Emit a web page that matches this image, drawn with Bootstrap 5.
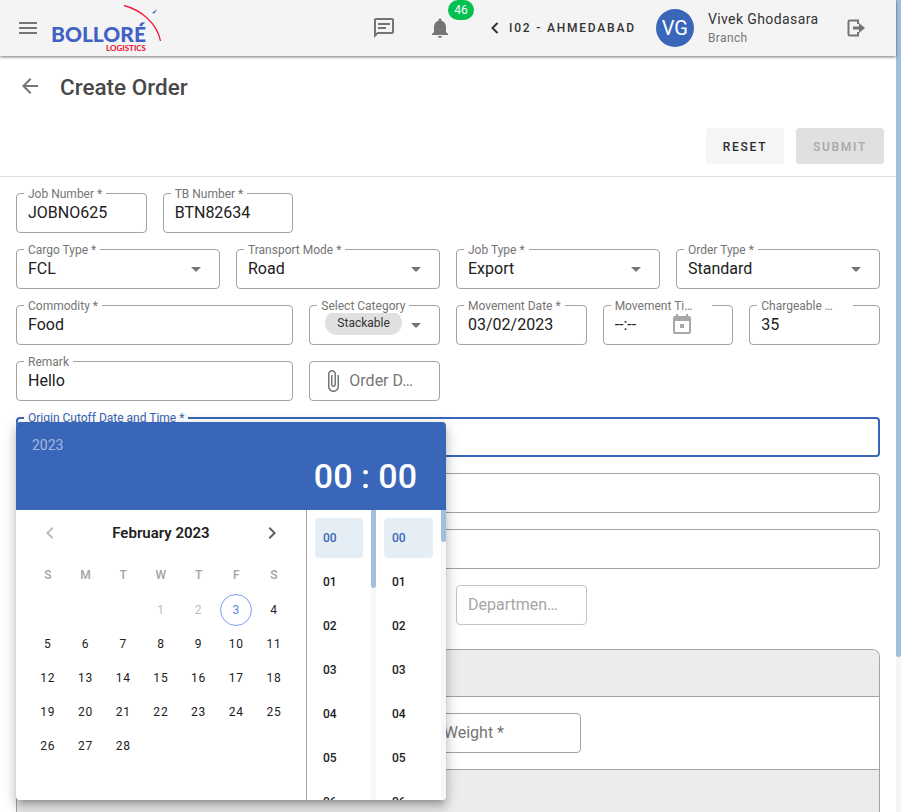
<!DOCTYPE html>
<html lang="en">
<head>
  <meta charset="UTF-8" />
  <title>Create Order</title>
  <link href="https://cdn.jsdelivr.net/npm/bootstrap@5.3.3/dist/css/bootstrap.min.css" rel="stylesheet" />
  <style>
    html, body { height: 100%; overflow: hidden; }
    body { font-family: Roboto, "Liberation Sans", sans-serif; color: #212121; background: #fff; }
    .shell { height: 812px; overflow: hidden; position: relative; }
    .page-col { width: 896px; flex: none; }
    .page-bar { width: 5px; flex: none; background: #f5f5f5; }
    .page-thumb { height: 657px; background: #a3bfe0; border-radius: 0 0 3px 3px; }

    /* top bar */
    .topbar { height: 56px; background: #f4f4f4; box-shadow: 0 1px 3px rgba(0,0,0,.55); position: relative; z-index: 2; }
    .ico { fill: #757575; display: block; flex: none; }
    .menu-btn { margin-left: 16px; }
    .brand { margin-left: 11px; flex: none; }
    .msg-ico { margin-left: 209px; }
    .bell-wrap { margin-left: 32px; position: relative; width: 24px; height: 24px; }
    .count-pill { position: absolute; left: 20px; top: -16px; width: 26px; height: 20px; background: #00c04f; color: #fff; font-size: 12px; font-weight: 400; line-height: 20px; text-align: center; border-radius: 10px; }
    .branch-back { margin-left: 38px; flex: none; }
    .branch-name { margin-left: 9px; font-size: 12px; font-weight: 500; letter-spacing: 1.8px; color: #333; white-space: nowrap; }
    .avatar { width: 38px; height: 38px; margin-left: 20px; background: #3966b8; color: #fff; font-size: 20px; flex: none; }
    .who { margin-left: 14px; width: 135px; letter-spacing: .4px; }
    .who-name { font-size: 14px; line-height: 18px; color: #333; }
    .who-role { font-size: 12px; line-height: 16px; color: #777; margin-top: 2px; }

    /* title and actions */
    .title-row { height: 60px; padding-left: 18px; }
    .page-title { font-size: 22.5px; font-weight: 500; color: #484848; margin: 1px 0 0 18px; line-height: 60px; }
    .action-row { padding: 12px 12px 12px 0; border-bottom: 1px solid #e0e0e0; }
    .act-btn { height: 36px; font-size: 12px; font-weight: 500; letter-spacing: 1.75px; border: 0; border-radius: 4px; padding: 2px 0 0; }
    .act-reset { width: 78px; background: #f5f5f5; color: #2b2b2b; }
    .act-submit { width: 88px; background: #e0e0e0; color: #a8a8a8; }
    .act-btn:disabled { background: #e0e0e0; color: #a8a8a8; opacity: 1; }

    /* outlined fields */
    .fld { height: 40px; border: 1px solid #a3a3a3; border-radius: 4px; padding: 0 11px; position: relative; background: #fff; }
    .fld-label { position: absolute; left: 7px; top: -7px; background: #fff; padding: 0 4px; font-size: 12px; line-height: 14px; color: #757575; white-space: nowrap; }
    .fld-label.cut { padding-right: 20px; }
    .fld-in { flex: 1 1 auto; min-width: 0; border: 0; padding: 0; background: transparent; font-size: 16px; line-height: 20px; color: #212121; border-radius: 0; box-shadow: none; }
    .fld-in:focus { box-shadow: none; background: transparent; }
    .caret-down { width: 0; height: 0; border-left: 5px solid transparent; border-right: 5px solid transparent; border-top: 5px solid #757575; margin-right: 7px; margin-left: 8px; flex: none; }
    .soft-chip { height: 24px; line-height: 24px; padding: 0 12px; margin-left: 4px; margin-top: -4px; border-radius: 12px; background: #e0e0e0; font-size: 12px; color: #333; }
    .fld-focus { border: 2px solid #3966b8; padding: 0 10px; }
    .fld-focus .fld-label { color: #3966b8; left: 6px; top: -8px; }
    .fld-off { border-color: #c4c4c4; }
    .muted-txt { font-size: 16px; color: #777; white-space: nowrap; }
    .fld-off .muted-txt { color: #a6a6a6; }
    .time-ico { flex: none; margin-right: 27px; }

    /* panel below the fields */
    .grey-panel { border: 1px solid #a3a3a3; border-bottom: 0; border-radius: 8px 8px 0 0; overflow: hidden; margin-top: 24px; }
    .panel-head { height: 47px; background: #ebecee; border-bottom: 1px solid #a3a3a3; }
    .panel-body { height: 73px; padding: 16px; border-bottom: 1px solid #a3a3a3; }
    .panel-next { height: 60px; background: #ebecee; }
    .w-left { width: 337px; }
    .w-right { width: 195px; }
    .plain-val { font-size: 16px; color: #757575; white-space: nowrap; }

    /* date time popup */
    .dt-popup { position: absolute; left: 16px; top: 422px; width: 430px; height: 378px; background: #fff; border-radius: 4px; overflow: hidden; z-index: 3;
      box-shadow: 0 5px 5px -3px rgba(0,0,0,.2), 0 8px 10px 1px rgba(0,0,0,.14), 0 3px 14px 2px rgba(0,0,0,.12); }
    .dt-head { height: 88px; background: #3966b8; color: #fff; padding: 14px 29px 0 16px; }
    .dt-year { font-size: 14px; line-height: 18px; color: rgba(255,255,255,.55); }
    .dt-time { font-size: 34px; font-weight: 500; line-height: 40px; text-align: right; margin-top: 2px; }
    .dt-body { height: 290px; }
    .cal-side { width: 291px; flex: none; padding: 0 13px; border-right: 1px solid #a3a3a3; }
    .cal-month { height: 46px; padding: 0 9px 0 9px; }
    .cal-title { font-size: 15px; font-weight: 600; color: #212121; }
    .cal-grid { display: grid; grid-template-columns: repeat(7, 37.7px); }
    .cal-dow { height: 36px; margin-top: 1px; font-size: 12px; font-weight: 500; color: #a3a3a3; }
    .cal-day { height: 34px; font-size: 12px; font-weight: 400; letter-spacing: .8px; color: #212121; }
    .cal-day.past { color: #bdbdbd; }
    .today-ring { width: 32px; height: 32px; border: 1px solid #7e9cf5; color: #5f86e6; }
    .hr-col { height: 290px; overflow: hidden; flex: none; }
    .hr-col-a { width: 64px; padding: 8px 8px 0 8px; }
    .hr-col-b { width: 65px; padding: 8px 8px 0 8px; }
    .hr-cell { height: 40px; margin-bottom: 4px; padding-left: 8px; font-size: 12px; font-weight: 500; color: #212121; border-radius: 4px; line-height: 40px; }
    .hr-cell.on { background: #e6eef5; color: #3966b8; }
    .hr-bar { width: 5px; height: 290px; background: #f7f7f7; flex: none; }
    .hr-thumb { background: #a3bfe0; border-radius: 0 0 3px 3px; }
    .thumb-a { height: 78px; }
    .thumb-b { height: 32px; }
  </style>
</head>
<body>
  <div class="shell d-flex">
    <div class="page-col">

      <header class="topbar d-flex align-items-center">
        <svg class="ico menu-btn" width="24" height="24" viewBox="0 0 24 24"><path d="M3 18h18v-2H3v2zm0-5h18v-2H3v2zm0-7v2h18V6H3z"/></svg>
        <svg class="brand" width="112" height="56" viewBox="0 0 112 56">
          <path d="M73 5.500C90 10 106 23 109.500 41" fill="none" stroke="#ee1c3e" stroke-width="1.300"/>
          <path d="M101 13l5-4-2.500 4.500z" fill="#3f62c4"/>
          <path d="M89 26l3.500-4-1.500 4.500z" fill="#3f62c4"/>
          <text x="0" y="42" font-family="Lato, sans-serif" font-weight="900" font-size="20" fill="#3f62c4" textLength="95" lengthAdjust="spacingAndGlyphs">BOLLORÉ</text>
          <text x="55" y="51" font-family="Lato, sans-serif" font-weight="900" font-size="7.500" fill="#ee1c3e" textLength="40" lengthAdjust="spacingAndGlyphs">LOGISTICS</text>
        </svg>
        <svg class="ico msg-ico" width="24" height="24" viewBox="0 0 24 24"><path d="M20 2H4c-1.100 0-2 .9-2 2v18l4-4h14c1.100 0 2-.9 2-2V4c0-1.100-.9-2-2-2zm0 14H5.200L4 17.200V4h16v12zM6 7h12v2H6zm0 4h8v2H6z"/></svg>
        <div class="bell-wrap">
          <svg class="ico" width="24" height="24" viewBox="0 0 24 24"><path d="M12 22c1.100 0 2-.9 2-2h-4c0 1.100.89 2 2 2zm6-6v-5c0-3.070-1.640-5.640-4.500-6.320V4c0-.83-.67-1.500-1.500-1.500s-1.500.67-1.500 1.500v.68C7.630 5.360 6 7.920 6 11v5l-2 2v1h16v-1l-2-2z"/></svg>
          <span class="count-pill">46</span>
        </div>
        <svg class="branch-back" width="10" height="14" viewBox="0 0 10 14"><path d="M7.500 2L2.500 7l5 5" fill="none" stroke="#333" stroke-width="2"/></svg>
        <span class="branch-name">I02 - AHMEDABAD</span>
        <div class="avatar rounded-circle d-flex align-items-center justify-content-center">VG</div>
        <div class="who">
          <div class="who-name">Vivek Ghodasara</div>
          <div class="who-role">Branch</div>
        </div>
        <svg width="20" height="20" viewBox="0 0 20 20" class="flex-shrink-0 ms-1">
          <path d="M11 6V2.500H2.500a1 1 0 0 0-1 1v13a1 1 0 0 0 1 1H11V14" fill="none" stroke="#757575" stroke-width="2"/>
          <path d="M6 8.500h6V5l6 5-6 5v-3.500H6z" fill="#757575"/>
        </svg>
      </header>

      <div class="title-row d-flex align-items-center">
        <svg class="ico" width="24" height="24" viewBox="0 0 24 24"><path d="M20 11H7.830l5.590-5.590L12 4l-8 8 8 8 1.410-1.410L7.830 13H20v-2z"/></svg>
        <h1 class="page-title">Create Order</h1>
      </div>
      <div class="action-row d-flex justify-content-end gap-2">
        <button type="button" class="btn act-btn act-reset me-1">RESET</button>
        <button type="button" class="btn act-btn act-submit" disabled>SUBMIT</button>
      </div>

      <form class="p-3">
        <div class="row g-3 mb-3">
          <div class="col-2"><div class="fld d-flex align-items-center"><label class="fld-label">Job Number *</label><input class="form-control fld-in" value="JOBNO625" readonly /></div></div>
          <div class="col-2"><div class="fld d-flex align-items-center"><label class="fld-label">TB Number *</label><input class="form-control fld-in" value="BTN82634" readonly /></div></div>
        </div>
        <div class="row g-3 mb-3">
          <div class="col-3"><div class="fld d-flex align-items-center"><label class="fld-label">Cargo Type *</label><input class="form-control fld-in" value="FCL" readonly /><span class="caret-down"></span></div></div>
          <div class="col-3"><div class="fld d-flex align-items-center"><label class="fld-label">Transport Mode *</label><input class="form-control fld-in" value="Road" readonly /><span class="caret-down"></span></div></div>
          <div class="col-3"><div class="fld d-flex align-items-center"><label class="fld-label">Job Type *</label><input class="form-control fld-in" value="Export" readonly /><span class="caret-down"></span></div></div>
          <div class="col-3"><div class="fld d-flex align-items-center"><label class="fld-label">Order Type *</label><input class="form-control fld-in" value="Standard" readonly /><span class="caret-down"></span></div></div>
        </div>
        <div class="row g-3 mb-3">
          <div class="col-4"><div class="fld d-flex align-items-center"><label class="fld-label">Commodity *</label><input class="form-control fld-in" value="Food" readonly /></div></div>
          <div class="col-2"><div class="fld d-flex align-items-center"><label class="fld-label">Select Category</label><span class="soft-chip">Stackable</span><span class="flex-grow-1"></span><span class="caret-down"></span></div></div>
          <div class="col-2"><div class="fld d-flex align-items-center"><label class="fld-label">Movement Date *</label><input class="form-control fld-in" value="03/02/2023" readonly /></div></div>
          <div class="col-2"><div class="fld d-flex align-items-center"><label class="fld-label cut">Movement Ti…</label><input class="form-control fld-in" value="--:--" readonly /><svg class="time-ico" width="24" height="24" viewBox="0 0 24 24" fill="#a8a8a8"><path d="M19 3h-1V1h-2v2H8V1H6v2H5a2 2 0 0 0-2 2v14a2 2 0 0 0 2 2h14a2 2 0 0 0 2-2V5a2 2 0 0 0-2-2zm0 16H5V8h14v11zM10 11h4v4h-4z"/></svg></div></div>
          <div class="col-2"><div class="fld d-flex align-items-center"><label class="fld-label cut">Chargeable …</label><input class="form-control fld-in" value="35" readonly /></div></div>
        </div>
        <div class="row g-3 mb-3">
          <div class="col-4"><div class="fld d-flex align-items-center"><label class="fld-label">Remark</label><input class="form-control fld-in" value="Hello" readonly /></div></div>
          <div class="col-2"><div class="fld d-flex align-items-center"><svg class="me-1 flex-shrink-0" width="24" height="24" viewBox="0 0 24 24" fill="#757575"><path d="M16.500 6v11.500c0 2.210-1.790 4-4 4s-4-1.790-4-4V5c0-1.380 1.120-2.500 2.500-2.500s2.500 1.120 2.500 2.500v10.500c0 .55-.45 1-1 1s-1-.45-1-1V6H10v9.500c0 1.380 1.120 2.500 2.500 2.500s2.500-1.120 2.500-2.500V5c0-2.210-1.790-4-4-4S7 2.790 7 5v12.500c0 3.040 2.460 5.500 5.500 5.500s5.500-2.460 5.500-5.500V6h-1.500z"/></svg><span class="muted-txt">Order D…</span></div></div>
        </div>
        <div class="row g-3 mb-3">
          <div class="col-12"><div class="fld fld-focus d-flex align-items-center"><label class="fld-label">Origin Cutoff Date and Time *</label></div></div>
        </div>
        <div class="row g-3 mb-3"><div class="col-12"><div class="fld"></div></div></div>
        <div class="row g-3 mb-3"><div class="col-12"><div class="fld"></div></div></div>
        <div class="row g-3 mb-3">
          <div class="col-4"><div class="fld"></div></div>
          <div class="col-2"><div class="fld"></div></div>
          <div class="col-2"><div class="fld fld-off d-flex align-items-center"><span class="muted-txt">Departmen…</span></div></div>
        </div>

        <div class="grey-panel">
          <div class="panel-head"></div>
          <div class="panel-body d-flex gap-3">
            <div class="fld w-left"></div>
            <div class="fld w-right d-flex align-items-center"><span class="plain-val">Gross Weight *</span></div>
          </div>
          <div class="panel-next"></div>
        </div>
      </form>
    </div>

    <div class="page-bar"><div class="page-thumb"></div></div>

    <div class="dt-popup">
      <div class="dt-head">
        <div class="dt-year">2023</div>
        <div class="dt-time">00 : 00</div>
      </div>
      <div class="dt-body d-flex">
        <div class="cal-side">
          <div class="cal-month d-flex align-items-center justify-content-between">
            <svg width="24" height="24" viewBox="0 0 24 24" fill="#bdbdbd"><path d="M15.410 7.410L14 6l-6 6 6 6 1.410-1.410L10.830 12z"/></svg>
            <span class="cal-title">February 2023</span>
            <svg width="24" height="24" viewBox="0 0 24 24" fill="#616161"><path d="M10 6L8.590 7.410 13.170 12l-4.580 4.590L10 18l6-6z"/></svg>
          </div>
          <div class="cal-grid cal-dow align-items-center text-center">
            <span>S</span><span>M</span><span>T</span><span>W</span><span>T</span><span>F</span><span>S</span>
          </div>
          <div class="cal-grid" id="calDays"></div>
        </div>
        <div class="hr-col hr-col-a" id="hoursA"></div>
        <div class="hr-bar"><div class="hr-thumb thumb-a"></div></div>
        <div class="hr-col hr-col-b" id="hoursB"></div>
        <div class="hr-bar"><div class="hr-thumb thumb-b"></div></div>
      </div>
    </div>
  </div>

  <script>
    // February 2023 starts on a Wednesday
    const calDays = document.getElementById('calDays');
    for (let i = 0; i < 3; i++) calDays.appendChild(document.createElement('span'));
    for (let d = 1; d <= 28; d++) {
      const cell = document.createElement('div');
      cell.className = 'cal-day d-flex align-items-center justify-content-center';
      if (d < 3) cell.classList.add('past');
      if (d === 3) {
        const ring = document.createElement('span');
        ring.className = 'today-ring rounded-circle d-flex align-items-center justify-content-center';
        ring.textContent = d;
        cell.appendChild(ring);
      } else {
        cell.textContent = d;
      }
      calDays.appendChild(cell);
    }

    ['hoursA', 'hoursB'].forEach(id => {
      const col = document.getElementById(id);
      for (let h = 0; h < 8; h++) {
        const cell = document.createElement('div');
        cell.className = 'hr-cell' + (h === 0 ? ' on' : '');
        cell.textContent = String(h).padStart(2, '0');
        col.appendChild(cell);
      }
    });
  </script>
  <script src="https://cdn.jsdelivr.net/npm/bootstrap@5.3.3/dist/js/bootstrap.bundle.min.js"></script>
</body>
</html>
